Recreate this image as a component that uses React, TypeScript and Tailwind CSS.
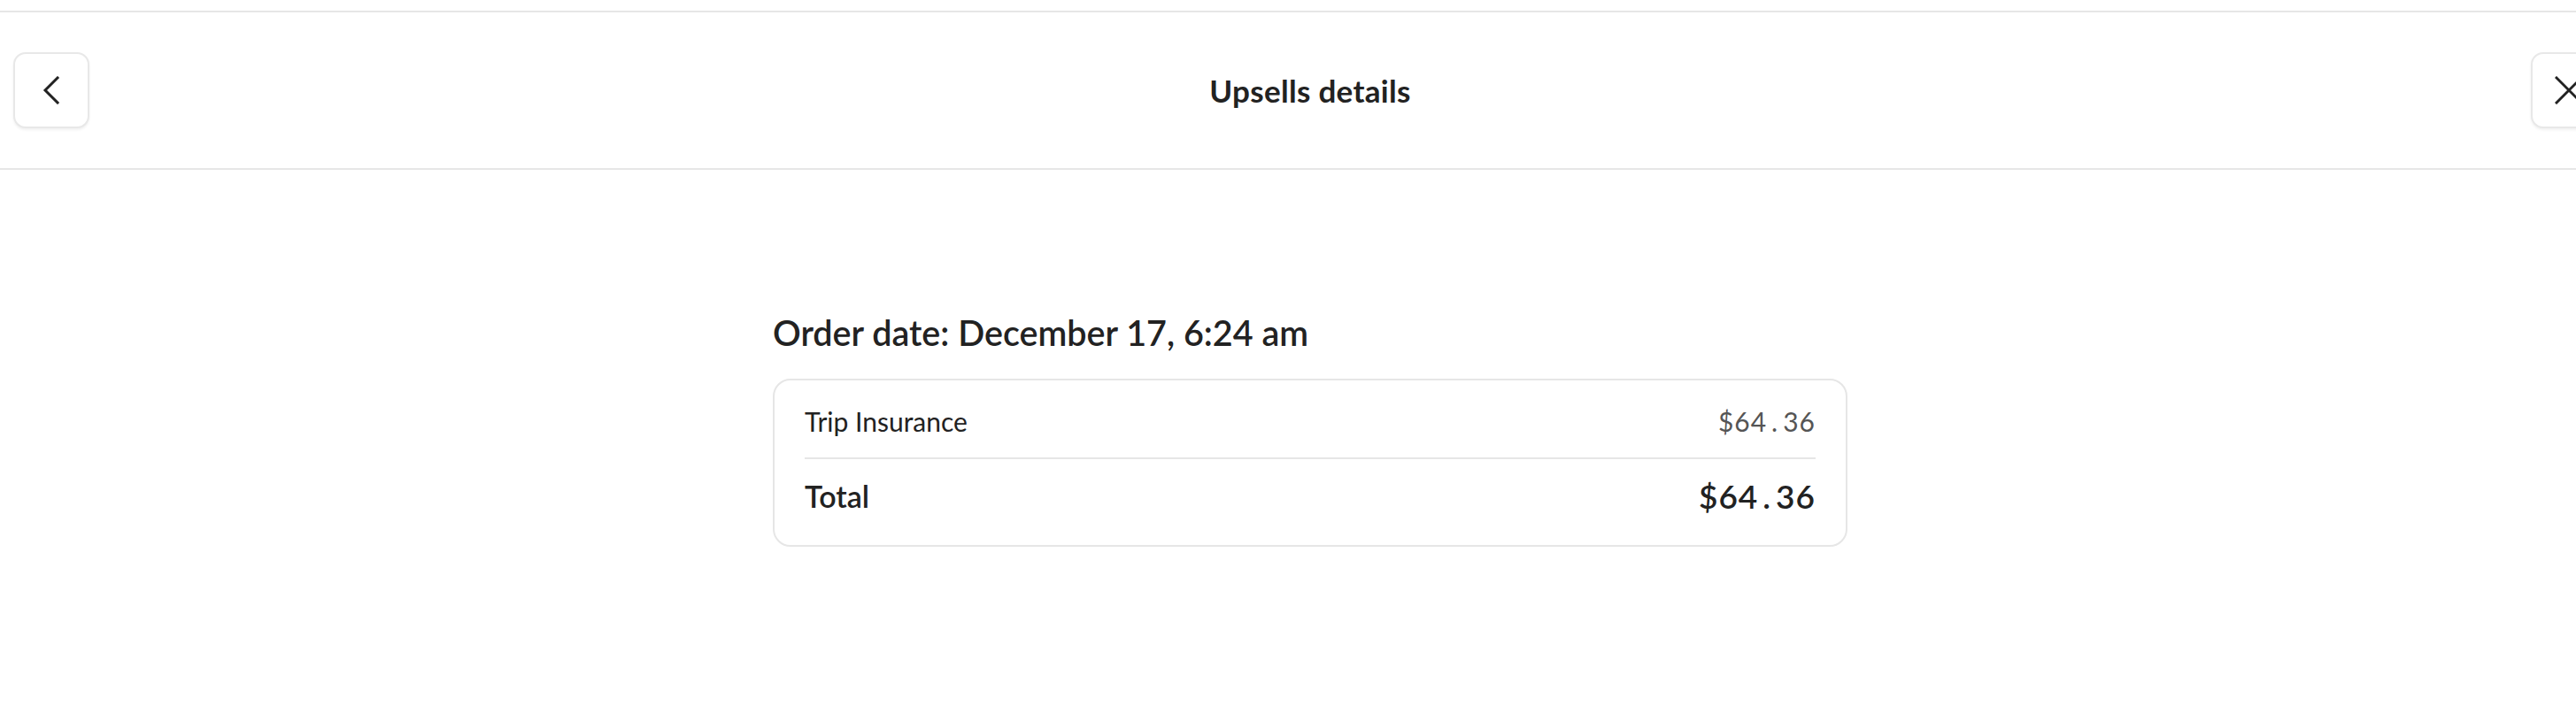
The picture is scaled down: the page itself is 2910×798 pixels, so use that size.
import React from 'react'

const font = { fontFamily: 'Lato, "Noto Sans", sans-serif' }

function IconButton({ children }: any){
  return (
    <button className="w-[86px] h-[86px] rounded-[14px] border-2 border-[#e8e8e8] bg-white shadow-[0_2px_3px_rgba(0,0,0,0.06)] flex items-center justify-center text-[#222]">
      {children}
    </button>
  )
}

function Price({ value, className }: any){
  const [a, b] = value.split('.')
  return <span className={`tabular-nums tracking-[1px] ${className}`}>{a}<span className="mx-[5px]">.</span>{b}</span>
}

export default function App(){
  return (
    <div className="w-[2960px] min-h-[798px] bg-white text-[#222]" style={font}>
      <div className="h-[12px]" />
      <div className="h-[180px] border-y-2 border-[#e6e6e6] px-[15px] grid grid-cols-[86px_1fr_86px] items-center">
        <IconButton>
          <svg width="20" height="32" viewBox="0 0 20 32" fill="none" stroke="currentColor" strokeWidth="3" strokeLinecap="square">
            <path d="M17 2 L3 16 L17 30" />
          </svg>
        </IconButton>
        <h1 className="text-center text-[35px] font-bold tracking-[0.3px]">Upsells details</h1>
        <IconButton>
          <svg width="32" height="32" viewBox="0 0 32 32" fill="none" stroke="currentColor" strokeWidth="3" strokeLinecap="square">
            <path d="M2 2 L30 30 M30 2 L2 30" />
          </svg>
        </IconButton>
      </div>

      <div className="w-[1214px] mx-auto pt-[160px]">
        <h2 className="text-[39.5px] leading-[48px] font-semibold mb-[28px]">Order date: December 17, 6:24 am</h2>
        <div className="rounded-[20px] border-2 border-[#e6e6e6] px-[34px]">
          <div className="h-[89px] pt-[5px] flex items-center justify-between border-b-2 border-[#e6e6e6]">
            <span className="text-[30px]">Trip Insurance</span>
            <Price value="$64.36" className="text-[30px] text-[#555]" />
          </div>
          <div className="h-[97px] pb-[14px] flex items-center justify-between">
            <span className="text-[34px] font-semibold">Total</span>
            <Price value="$64.36" className="text-[37px] font-semibold" />
          </div>
        </div>
      </div>
    </div>
  )
}
